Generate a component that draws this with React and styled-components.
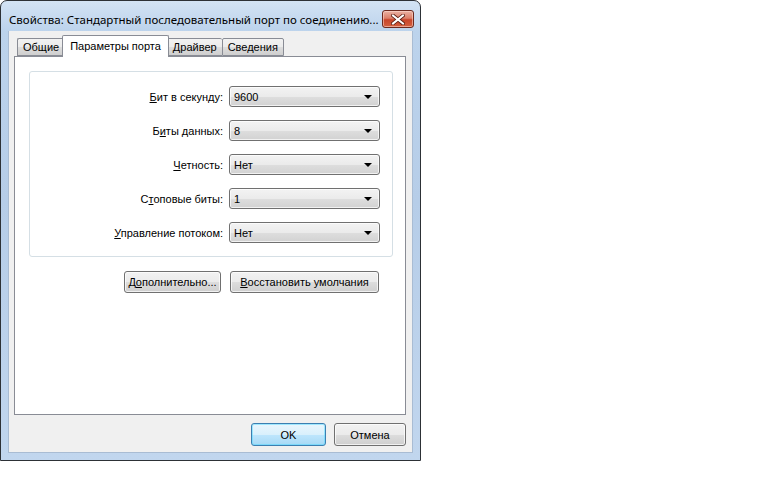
import React from "react";
import styled, { createGlobalStyle } from "styled-components";

const GlobalStyle = createGlobalStyle`
  html, body {
    margin: 0;
    padding: 0;
    background: #ffffff;
  }
  body {
    width: 768px;
    height: 480px;
    overflow: hidden;
    font-family: "Liberation Sans", Arial, sans-serif;
    font-size: 11px;
    color: #000000;
  }
`;

const Window = styled.div`
  box-sizing: border-box;
  width: 421px;
  height: 461px;
  border: 1px solid #2d3136;
  border-radius: 7px 7px 0 0;
  background: linear-gradient(
    180deg,
    #d3e3f4 0px,
    #bcd3ec 30px,
    #b6cde8 200px,
    #c1d6ee 100%
  );
  padding: 0 7px 7px 7px;
  display: flex;
  flex-direction: column;
`;

const TitleBar = styled.div`
  box-sizing: border-box;
  height: 30px;
  padding: 6px 0 0 1px;
  display: flex;
  align-items: center;
  justify-content: space-between;
`;

const Title = styled.div`
  font-family: "Noto Sans", "Open Sans", sans-serif;
  font-size: 11.5px;
  color: #000000;
  white-space: nowrap;
  overflow: hidden;
`;

const CloseButton = styled.div`
  box-sizing: border-box;
  flex-shrink: 0;
  width: 32px;
  height: 18px;
  margin-right: -1px;
  border: 1px solid #6d2a1f;
  border-radius: 3px;
  background: linear-gradient(
    180deg,
    #eab2a4 0%,
    #dc7f69 45%,
    #c8452a 55%,
    #d3603f 100%
  );
  box-shadow: inset 0 0 0 1px rgba(255, 220, 210, 0.55);
  display: flex;
  align-items: center;
  justify-content: center;
`;

const Client = styled.div`
  flex: 1;
  background: #f0f0f0;
  border: 1px solid #a9bcd3;
  border-top: none;
  padding: 5px 6px 6px 5px;
  display: flex;
  flex-direction: column;
`;

const TabStrip = styled.div`
  display: flex;
  align-items: flex-end;
  height: 21px;
  padding-left: 3px;
  margin-bottom: -1px;
  position: relative;
  z-index: 1;
`;

const Tab = styled.div`
  box-sizing: border-box;
  height: ${(p) => (p.$active ? "22px" : "18px")};
  padding: ${(p) => (p.$active ? "3px 7px 0 7px" : "1px 5px 0 5px")};
  margin: ${(p) => (p.$active ? "0 -2px" : "0 0 1px 0")};
  border: 1px solid #898c95;
  border-bottom: ${(p) => (p.$active ? "none" : "1px solid #898c95")};
  border-right: ${(p) => (p.$last || p.$active ? "1px solid #898c95" : "none")};
  border-radius: 2px 2px 0 0;
  background: ${(p) =>
    p.$active ? "#ffffff" : "linear-gradient(180deg, #f2f2f2 0%, #ebebeb 50%, #dddddd 51%, #cfcfcf 100%)"};
  position: relative;
  z-index: ${(p) => (p.$active ? 2 : 1)};
  white-space: nowrap;
  font-size: 11px;
  line-height: 14px;
  color: #000000;
`;

const TabPanel = styled.div`
  flex: 1;
  background: #ffffff;
  border: 1px solid #898c95;
  padding: 14px 12px 0 14px;
  display: flex;
  flex-direction: column;
`;

const GroupBox = styled.div`
  border: 1px solid #d5dfe5;
  border-radius: 3px;
  box-shadow: inset 1px 1px 0 #ffffff;
  padding: 14px 12px 13px 0;
  display: grid;
  grid-template-columns: 1fr 151px;
  column-gap: 6px;
  row-gap: 13px;
  align-items: center;
`;

const FieldLabel = styled.label`
  text-align: right;
  white-space: nowrap;
`;

const Key = styled.span`
  text-decoration: underline;
`;

const Combo = styled.div`
  box-sizing: border-box;
  height: 21px;
  border: 1px solid #707070;
  border-radius: 3px;
  background: linear-gradient(
    180deg,
    #f3f3f3 0%,
    #ebebeb 50%,
    #dedede 51%,
    #d2d2d2 100%
  );
  box-shadow: inset 0 0 0 1px rgba(255, 255, 255, 0.7);
  padding: 0 7px 0 4px;
  display: flex;
  align-items: center;
  justify-content: space-between;
`;

const Arrow = styled.span`
  width: 0;
  height: 0;
  border-left: 4px solid transparent;
  border-right: 4px solid transparent;
  border-top: 4px solid #000000;
`;

const ActionRow = styled.div`
  display: flex;
  justify-content: flex-end;
  gap: 9px;
  margin-top: 14px;
  padding-right: 14px;
`;

const Button = styled.div`
  box-sizing: border-box;
  width: ${(p) => p.$w}px;
  height: ${(p) => p.$h || 22}px;
  border: 1px solid ${(p) => (p.$default ? "#3c7fb1" : "#707070")};
  border-radius: 3px;
  background: ${(p) =>
    p.$default
      ? "linear-gradient(180deg, #eaf6fd 0%, #d9f0fc 50%, #bee6fd 51%, #a7d9f5 100%)"
      : "linear-gradient(180deg, #f2f2f2 0%, #ebebeb 50%, #dddddd 51%, #cfcfcf 100%)"};
  box-shadow: inset 0 0 0 1px
    ${(p) => (p.$default ? "rgba(72, 214, 255, 0.45)" : "rgba(255, 255, 255, 0.7)")};
  display: flex;
  align-items: center;
  justify-content: center;
  white-space: nowrap;
  font-size: 11px;
  color: #000000;
`;

const Footer = styled.div`
  display: flex;
  justify-content: flex-end;
  gap: 8px;
  margin-top: 8px;
`;

const fields = [
  { label: [<Key key="k">Б</Key>, "ит в секунду:"], value: "9600" },
  { label: ["Б", <Key key="k">и</Key>, "ты данных:"], value: "8" },
  { label: [<Key key="k">Ч</Key>, "етность:"], value: "Нет" },
  { label: ["С", <Key key="k">т</Key>, "оповые биты:"], value: "1" },
  { label: [<Key key="k">У</Key>, "правление потоком:"], value: "Нет" },
];

const tabs = ["Общие", "Параметры порта", "Драйвер", "Сведения"];

export default function App() {
  return (
    <>
      <GlobalStyle />
      <Window>
        <TitleBar>
          <Title>Свойства: Стандартный последовательный порт по соединению...</Title>
          <CloseButton>
            <svg width="14" height="11" viewBox="0 0 14 11">
              <path
                d="M2 1.5 L12 9.5 M12 1.5 L2 9.5"
                stroke="#5a1d12"
                strokeWidth="3.6"
                strokeLinecap="square"
              />
              <path
                d="M2 1.5 L12 9.5 M12 1.5 L2 9.5"
                stroke="#ffffff"
                strokeWidth="2"
                strokeLinecap="square"
              />
            </svg>
          </CloseButton>
        </TitleBar>
        <Client>
          <TabStrip>
            {tabs.map((t, i) => (
              <Tab key={t} $active={i === 1} $last={i === tabs.length - 1}>
                {t}
              </Tab>
            ))}
          </TabStrip>
          <TabPanel>
            <GroupBox>
              {fields.map((f, i) => (
                <React.Fragment key={i}>
                  <FieldLabel>{f.label}</FieldLabel>
                  <Combo>
                    <span>{f.value}</span>
                    <Arrow />
                  </Combo>
                </React.Fragment>
              ))}
            </GroupBox>
            <ActionRow>
              <Button $w={97}>
                Д<Key>о</Key>полнительно...
              </Button>
              <Button $w={149}>
                <Key>В</Key>осстановить умолчания
              </Button>
            </ActionRow>
          </TabPanel>
          <Footer>
            <Button $w={75} $h={23} $default>
              OK
            </Button>
            <Button $w={72} $h={23}>
              Отмена
            </Button>
          </Footer>
        </Client>
      </Window>
    </>
  );
}
